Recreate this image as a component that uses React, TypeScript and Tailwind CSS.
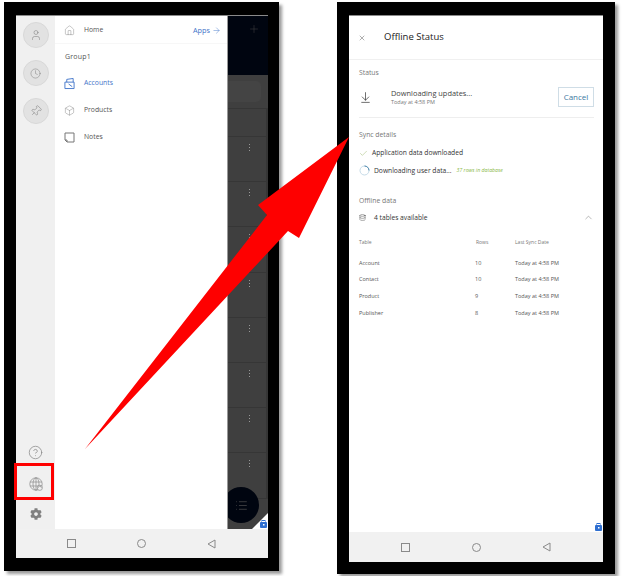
import React from "react";
import { ArrowRight, ArrowDownToLine, Box, Check, ChevronUp, Clock, Database, HelpCircle, Home, List, Pin, Plus, User, X } from "lucide-react";
import { FaCog } from "react-icons/fa";

const FONT = "font-['Open_Sans','Noto_Sans',sans-serif]";

const tables = [
  { name: "Account", rows: "10" },
  { name: "Contact", rows: "10" },
  { name: "Product", rows: "9" },
  { name: "Publisher", rows: "8" },
];

function NavBar({ className }: { className: string }) {
  return (
    <div className={`flex items-center justify-between bg-[#f1f1f1] ${className}`}>
      <div className="w-[9px] h-[9px] border border-[#8a8a8a]" />
      <div className="w-[9px] h-[9px] rounded-full border border-[#8a8a8a]" />
      <svg width="9" height="10" viewBox="0 0 9 10" fill="none" stroke="#8a8a8a">
        <path d="M8 1 L1 5 L8 9 Z" />
      </svg>
    </div>
  );
}

function Corner() {
  return (
    <svg width="16" height="16" viewBox="0 0 16 16" className="absolute right-0 bottom-0">
      <path d="M0 16 L16 0 V16 Z" fill="#ffffff" />
      <rect x="8" y="9" width="7" height="6" rx="1" fill="#2f6fd0" />
      <rect x="10" y="7.5" width="3" height="2" fill="none" stroke="#2f6fd0" />
      <rect x="11" y="11" width="1.5" height="1.5" fill="#ffffff" />
    </svg>
  );
}

function RoundButton({ children }: { children: React.ReactNode }) {
  return (
    <div className="w-[26px] h-[26px] rounded-full bg-[#e2e2e2] border border-[#d8d8d8] flex items-center justify-center text-[#777]">
      {children}
    </div>
  );
}

function MenuItem({ icon, label, active }: { icon: React.ReactNode; label: string; active?: boolean }) {
  return (
    <div className={`h-[27px] pl-[9px] flex items-center gap-[9px] text-[6.8px] ${active ? "text-[#3f74c9]" : "text-[#555]"}`}>
      <span className="w-[11px] flex justify-center">{icon}</span>
      {label}
    </div>
  );
}

function DarkRow() {
  return (
    <div className="h-[45.2px] border-b border-r-2 border-[#363636] flex justify-end items-start pt-[7px] pr-[16px] shrink-0">
      <div className="flex flex-col gap-[2px]">
        <div className="w-[1px] h-[1px] bg-[#999]" />
        <div className="w-[1px] h-[1px] bg-[#999]" />
        <div className="w-[1px] h-[1px] bg-[#999]" />
      </div>
    </div>
  );
}

export default function App() {
  return (
    <div className={`relative w-[622px] h-[576px] bg-white overflow-hidden flex ${FONT}`}>
      {/* Left phone */}
      <div className="ml-[4px] mt-[2px] w-[275px] h-[569px] bg-black pl-[12px] pt-[13px] shadow-[3px_3px_3px_#9a9a9a]">
        <div className="w-[252px] h-[543px] flex flex-col border-t border-[#8a8a8a]">
          <div className="flex h-[513px]">
            {/* Icon rail */}
            <div className="w-[39px] bg-[#f0f0f0] flex flex-col items-center pt-[6px] pb-[9px]">
              <div className="flex flex-col gap-[12px]">
                <RoundButton><User size={12} strokeWidth={1} /></RoundButton>
                <RoundButton><Clock size={11} strokeWidth={1} /></RoundButton>
                <RoundButton><Pin size={12} strokeWidth={1} className="rotate-45" /></RoundButton>
              </div>
              <div className="mt-auto flex flex-col items-center gap-[17px] text-[#8a8a8a]">
                <HelpCircle size={15} strokeWidth={1.2} />
                <svg width="14" height="14" viewBox="0 0 14 14" fill="none" stroke="#8a8a8a" strokeWidth="0.7">
                  <circle cx="7" cy="7" r="6.2" />
                  <ellipse cx="7" cy="7" rx="3" ry="6.2" />
                  <path d="M7 .8 V13.2 M1 5 H13 M1 9 H13" />
                  <circle cx="10.8" cy="10.8" r="2.6" fill="#f0f0f0" />
                  <path d="M9.2 10.8 A1.6 1.6 0 0 1 12.4 10.8" />
                </svg>
                <FaCog size={12} color="#808080" />
              </div>
            </div>
            {/* Menu */}
            <div className="w-[173px] bg-white border-r border-[#999]">
              <div className="h-[28px] pt-[1px] flex items-center border-b border-[#f7f7f7] pl-[9px] pr-[6px] text-[6.8px] text-[#555]">
                <Home size={11} strokeWidth={0.9} className="text-[#777]" />
                <span className="ml-[9px]">Home</span>
                <span className="ml-auto text-[7.3px] text-[#3f74c9]">Apps</span>
                <ArrowRight size={9} strokeWidth={1.2} className="ml-[2px] text-[#3f74c9]" />
              </div>
              <div className="pl-[10px] pt-[8px] pb-[5px] h-[25px] text-[7px] text-[#555] tracking-[0.2px]">Group1</div>
              <div className="pt-[1px]">
                <MenuItem
                  active
                  label="Accounts"
                  icon={
                    <svg width="12" height="13" viewBox="0 0 12 13" fill="none" stroke="#3f74c9">
                      <path d="M1 5 H11 V12 H1 Z M3 5 V2 L10 1 V5 M5 7 L9 10" />
                    </svg>
                  }
                />
                <MenuItem label="Products" icon={<Box size={11} strokeWidth={0.9} className="text-[#777]" />} />
                <MenuItem
                  label="Notes"
                  icon={
                    <svg width="11" height="11" viewBox="0 0 11 11" fill="none" stroke="#777">
                      <path d="M1 8 V1 H10 V10 H3 L1 8 Z M3 10 V8 H1" />
                    </svg>
                  }
                />
              </div>
            </div>
            {/* Dimmed app behind */}
            <div className="relative w-[40px] bg-[#3f3f3f] overflow-hidden flex flex-col">
              <div className="h-[59px] bg-[#000510] shrink-0 flex justify-end items-start pt-[7px] pr-[8px]">
                <Plus size={12} strokeWidth={1} className="text-[#444]" />
              </div>
              <div className="h-[34px] shrink-0 border-b border-[#363636] pt-[6px]">
                <div className="w-[33px] h-[21px] rounded-r-[5px] bg-[#444]" />
              </div>
              <div className="h-[28px] shrink-0 border-b border-r-2 border-[#363636]" />
              <DarkRow />
              <DarkRow />
              <DarkRow />
              <DarkRow />
              <DarkRow />
              <DarkRow />
              <DarkRow />
              <DarkRow />
              <div className="absolute -left-[5px] bottom-[6px] w-[36px] h-[36px] rounded-full bg-[#000510] flex items-center justify-center">
                <List size={13} strokeWidth={1.2} className="text-[#555]" />
              </div>
              <Corner />
            </div>
          </div>
          <NavBar className="h-[29px] pl-[51px] pr-[52px]" />
        </div>
      </div>

      {/* Right phone */}
      <div className="ml-[58px] mt-[2px] w-[278px] h-[572px] bg-black pl-[12px] pt-[13px] shadow-[3px_3px_3px_#9a9a9a]">
        <div className="relative w-[254px] h-[547px] flex flex-col bg-white border-t border-[#8a8a8a]">
          <div className="h-[44px] flex items-center pl-[9px] border-b border-[#f0f0f0] shrink-0">
            <X size={8} strokeWidth={1.1} className="text-[#222]" />
            <span className="ml-[18px] text-[9.5px] font-medium text-[#222]">Offline Status</span>
          </div>
          <div className="pl-[10px] pr-[9px] flex-1">
            <div className="pt-[8px] text-[6.8px] text-[#777]">Status</div>
            <div className="flex items-center h-[37px] mt-[3px] border-b border-[#eeeeee] pb-[4px]">
              <ArrowDownToLine size={13} strokeWidth={1.2} className="text-[#222]" />
              <div className="ml-[19px]">
                <div className="text-[7.4px] leading-[10px] text-[#444]">Downloading updates...</div>
                <div className="text-[5.5px] leading-[8px] text-[#777]">Today at 4:58 PM</div>
              </div>
              <div className="ml-auto w-[36px] h-[20px] border border-[#cfdde6] flex items-center justify-center text-[8px] text-[#3d7a9f]">
                Cancel
              </div>
            </div>
            <div className="pt-[12px] text-[6.8px] text-[#777]">Sync details</div>
            <div className="mt-[7px] flex items-center text-[6.7px] text-[#333] h-[12px]">
              <Check size={9} strokeWidth={1} className="text-[#7ba23f]" />
              <span className="ml-[4px]">Application data downloaded</span>
            </div>
            <div className="mt-[5px] flex items-center text-[6.7px] text-[#333] h-[13px]">
              <svg width="11" height="11" viewBox="0 0 11 11" fill="none">
                <circle cx="5.5" cy="5.5" r="4.5" stroke="#c6dbe8" />
                <path d="M5.5 1 A4.5 4.5 0 0 1 10 5.5" stroke="#4c87ad" />
              </svg>
              <span className="ml-[4px]">Downloading user data...</span>
              <span className="ml-[5px] text-[5.2px] italic text-[#8ab848]">37 rows in database</span>
            </div>
            <div className="mt-[19px] text-[6.8px] text-[#777]">Offline data</div>
            <div className="mt-[5px] flex items-center h-[12px] text-[6.7px] text-[#333]">
              <Database size={7} strokeWidth={1.4} className="text-[#333]" />
              <span className="ml-[8px]">4 tables available</span>
              <ChevronUp size={11} strokeWidth={0.9} className="ml-auto text-[#555]" />
            </div>
            <div className="mt-[14px] grid grid-cols-[117px_39px_1fr] text-[5px] text-[#777] h-[11px] items-center">
              <span>Table</span>
              <span>Rows</span>
              <span>Last Sync Date</span>
            </div>
            <div className="mt-[6px]">
              {tables.map((t) => (
                <div key={t.name} className="grid grid-cols-[116px_40px_1fr] h-[16.7px] items-center text-[5.5px] text-[#555]">
                  <span>{t.name}</span>
                  <span>{t.rows}</span>
                  <span>Today at 4:58 PM</span>
                </div>
              ))}
            </div>
          </div>
          <div className="absolute right-0 bottom-[30px]"><Corner /></div>
          <NavBar className="h-[30px] shrink-0 pl-[52px] pr-[52px]" />
        </div>
      </div>

      {/* Red highlight box around the globe */}
      <div className="absolute left-[14px] top-[463px] w-[40px] h-[37px] border-[3px] border-[#fe0000]" />

      {/* Red arrow */}
      <svg width="622" height="576" viewBox="0 0 622 576" className="absolute left-0 top-0 pointer-events-none">
        <polygon points="349,137 258,205 267,215 85,449 288,231 299,238" fill="#fe0000" />
      </svg>
    </div>
  );
}
